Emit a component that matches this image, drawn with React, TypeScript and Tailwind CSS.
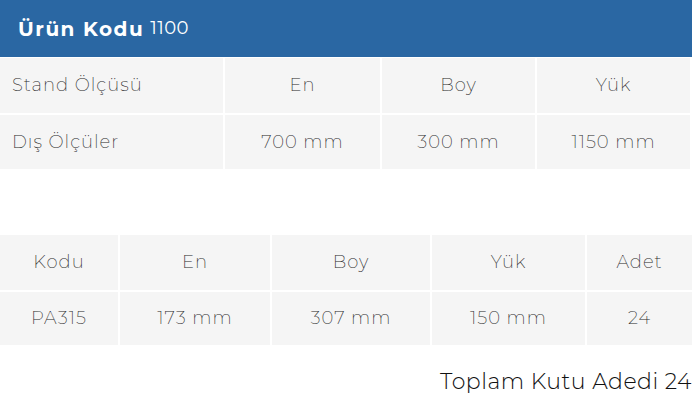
export default function App() {
  const font = { fontFamily: 'Montserrat, Inter, "Open Sans", sans-serif' };
  const cell = "bg-[#f5f5f5] flex items-center justify-center text-[18px] font-extralight tracking-[1px] text-[#2a2a2a]";
  return (
    <div className="w-[693px] h-[406px] bg-white overflow-hidden" style={font}>
      <div className="w-[692px] h-[57px] bg-[#2a67a3] flex items-center pl-[18px] text-white text-[20px]">
        <span className="font-bold tracking-[1.5px]">Ürün Kodu</span>
        <span className="ml-[6px] font-normal text-[18px] tracking-[0.5px]">1100</span>
      </div>
      <div className="w-[690px] mt-[1px] grid grid-cols-[223px_155px_153px_1fr] grid-rows-[55px_54px] gap-[2px] bg-white">
        <div className={cell + " !justify-start pl-[12px]"}>Stand Ölçüsü</div>
        <div className={cell}>En</div>
        <div className={cell}>Boy</div>
        <div className={cell}>Yük</div>
        <div className={cell + " !justify-start pl-[12px]"}>Dış Ölçüler</div>
        <div className={cell}>700 mm</div>
        <div className={cell}>300 mm</div>
        <div className={cell}>1150 mm</div>
      </div>
      <div className="w-[692px] mt-[66px] grid grid-cols-[118px_150px_158px_153px_1fr] grid-rows-[55px_53px] gap-[2px] bg-white">
        <div className={cell}>Kodu</div>
        <div className={cell}>En</div>
        <div className={cell}>Boy</div>
        <div className={cell}>Yük</div>
        <div className={cell}>Adet</div>
        <div className={cell}>PA315</div>
        <div className={cell}>173 mm</div>
        <div className={cell}>307 mm</div>
        <div className={cell}>150 mm</div>
        <div className={cell}>24</div>
      </div>
      <div className="w-[692px] flex justify-end mt-[20px] text-[22px] tracking-[0.5px] text-[#111] font-light">
        Toplam Kutu Adedi 24
      </div>
    </div>
  );
}
